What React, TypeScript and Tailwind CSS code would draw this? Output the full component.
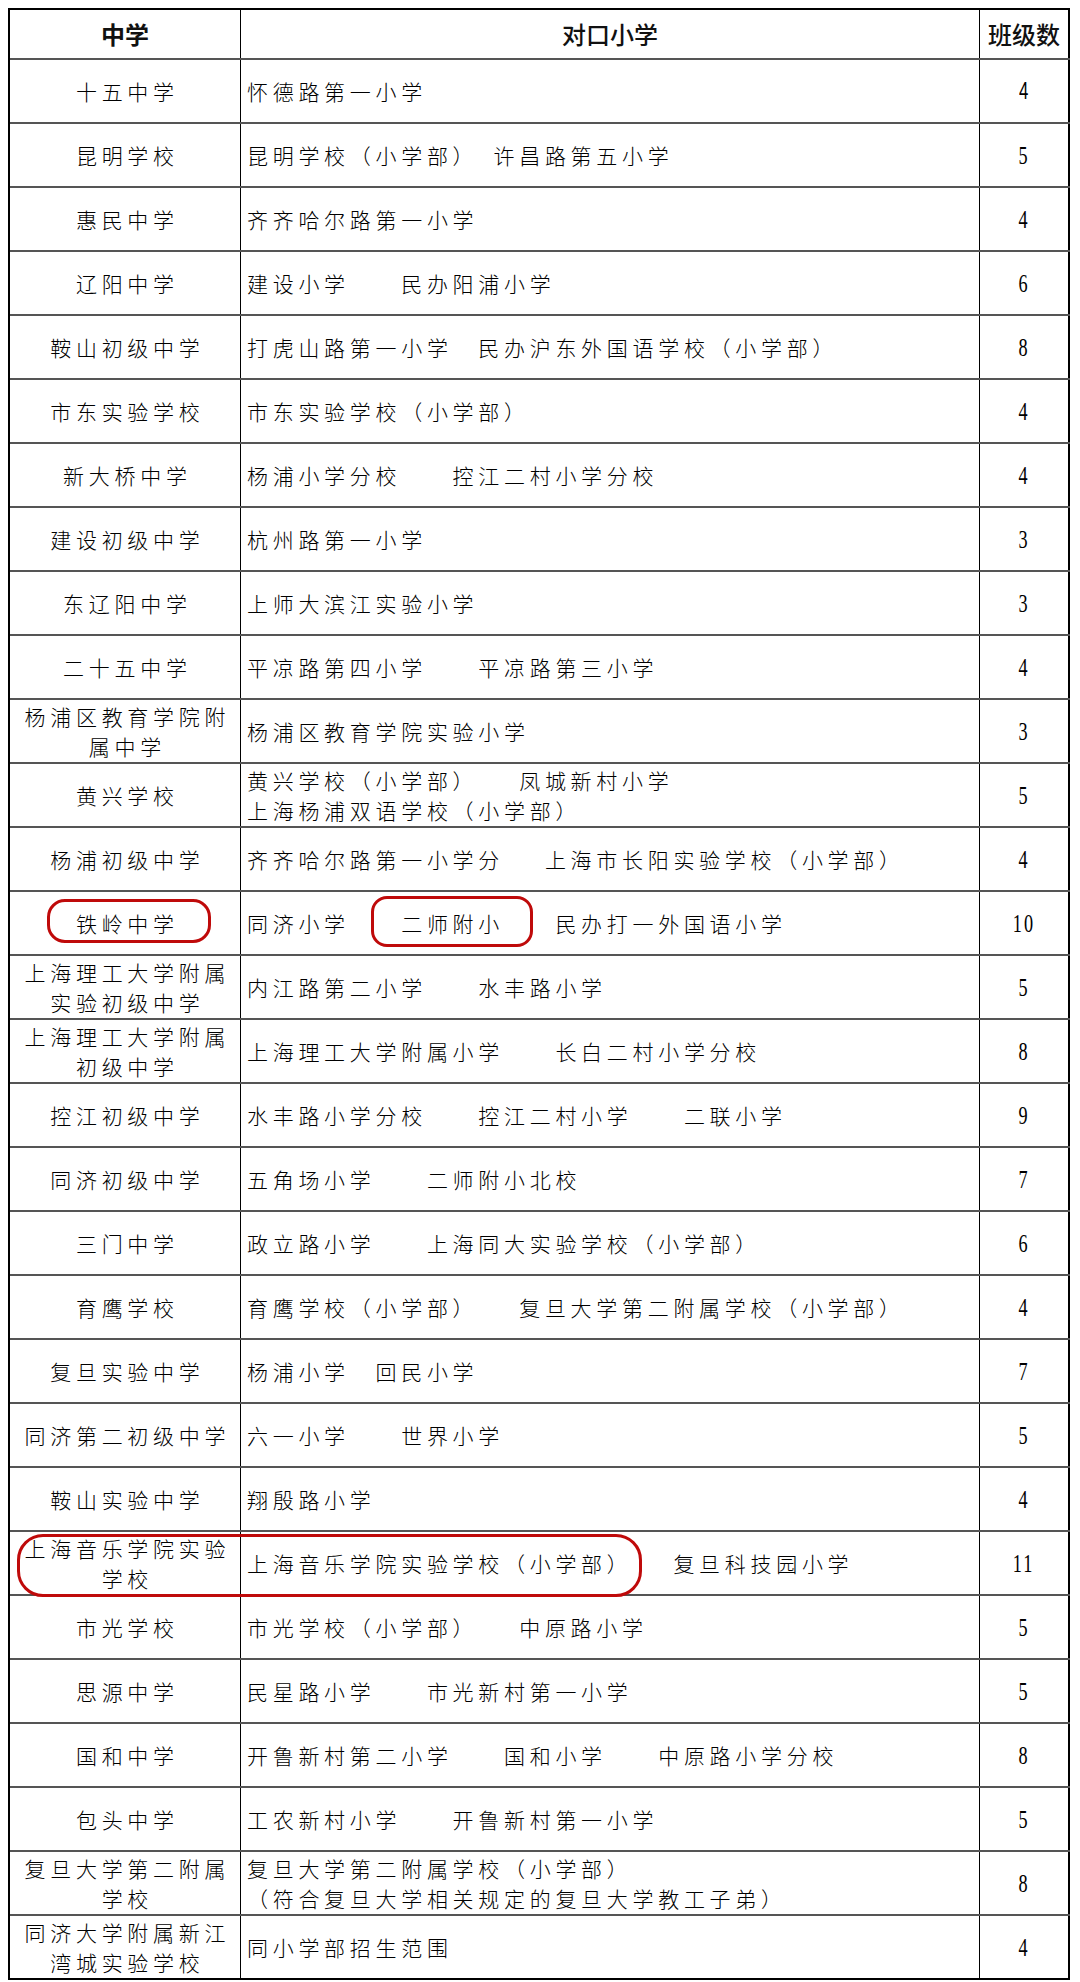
const S = "\u3000";
const S2 = S + S;

interface Row {
  school: string[];
  primary: string[];
  classes: string;
}

const rows: Row[] = [
  { school: ["十五中学"], primary: ["怀德路第一小学"], classes: "4" },
  { school: ["昆明学校"], primary: ["昆明学校（小学部）" + S + "许昌路第五小学"], classes: "5" },
  { school: ["惠民中学"], primary: ["齐齐哈尔路第一小学"], classes: "4" },
  { school: ["辽阳中学"], primary: ["建设小学" + S2 + "民办阳浦小学"], classes: "6" },
  { school: ["鞍山初级中学"], primary: ["打虎山路第一小学" + S + "民办沪东外国语学校（小学部）"], classes: "8" },
  { school: ["市东实验学校"], primary: ["市东实验学校（小学部）"], classes: "4" },
  { school: ["新大桥中学"], primary: ["杨浦小学分校" + S2 + "控江二村小学分校"], classes: "4" },
  { school: ["建设初级中学"], primary: ["杭州路第一小学"], classes: "3" },
  { school: ["东辽阳中学"], primary: ["上师大滨江实验小学"], classes: "3" },
  { school: ["二十五中学"], primary: ["平凉路第四小学" + S2 + "平凉路第三小学"], classes: "4" },
  { school: ["杨浦区教育学院附", "属中学"], primary: ["杨浦区教育学院实验小学"], classes: "3" },
  {
    school: ["黄兴学校"],
    primary: ["黄兴学校（小学部）" + S2 + "凤城新村小学", "上海杨浦双语学校（小学部）"],
    classes: "5",
  },
  { school: ["杨浦初级中学"], primary: ["齐齐哈尔路第一小学分" + S + "\u2002上海市长阳实验学校（小学部）"], classes: "4" },
  { school: ["铁岭中学"], primary: ["同济小学" + S2 + "二师附小" + S2 + "民办打一外国语小学"], classes: "10" },
  { school: ["上海理工大学附属", "实验初级中学"], primary: ["内江路第二小学" + S2 + "水丰路小学"], classes: "5" },
  { school: ["上海理工大学附属", "初级中学"], primary: ["上海理工大学附属小学" + S2 + "长白二村小学分校"], classes: "8" },
  { school: ["控江初级中学"], primary: ["水丰路小学分校" + S2 + "控江二村小学" + S2 + "二联小学"], classes: "9" },
  { school: ["同济初级中学"], primary: ["五角场小学" + S2 + "二师附小北校"], classes: "7" },
  { school: ["三门中学"], primary: ["政立路小学" + S2 + "上海同大实验学校（小学部）"], classes: "6" },
  { school: ["育鹰学校"], primary: ["育鹰学校（小学部）" + S2 + "复旦大学第二附属学校（小学部）"], classes: "4" },
  { school: ["复旦实验中学"], primary: ["杨浦小学" + S + "回民小学"], classes: "7" },
  { school: ["同济第二初级中学"], primary: ["六一小学" + S2 + "世界小学"], classes: "5" },
  { school: ["鞍山实验中学"], primary: ["翔殷路小学"], classes: "4" },
  { school: ["上海音乐学院实验", "学校"], primary: ["上海音乐学院实验学校（小学部）" + S2 + "复旦科技园小学"], classes: "11" },
  { school: ["市光学校"], primary: ["市光学校（小学部）" + S2 + "中原路小学"], classes: "5" },
  { school: ["思源中学"], primary: ["民星路小学" + S2 + "市光新村第一小学"], classes: "5" },
  { school: ["国和中学"], primary: ["开鲁新村第二小学" + S2 + "国和小学" + S2 + "中原路小学分校"], classes: "8" },
  { school: ["包头中学"], primary: ["工农新村小学" + S2 + "开鲁新村第一小学"], classes: "5" },
  {
    school: ["复旦大学第二附属", "学校"],
    primary: ["复旦大学第二附属学校（小学部）", "（符合复旦大学相关规定的复旦大学教工子弟）"],
    classes: "8",
  },
  { school: ["同济大学附属新江", "湾城实验学校"], primary: ["同小学部招生范围"], classes: "4" },
];

function DataRow({ row, index, last }: { row: Row; index: number; last: boolean }) {
  return (
    <div className={`flex h-[64px] border-b-2 ${last ? "border-black" : "border-[#555]"}`}>
      <div className="flex w-[231px] flex-col items-center justify-center border-r border-black pl-[4.7px] text-center text-[21px] leading-[30px] tracking-[4.7px] text-black">
        {row.school.map((line) => (
          <div key={line}>{line}</div>
        ))}
      </div>
      <div className="flex w-[739px] flex-col justify-center whitespace-nowrap border-r border-black pl-[6px] text-[21px] leading-[30px] tracking-[4.7px] text-black">
        {row.primary.map((line) => (
          <div key={line}>{line}</div>
        ))}
      </div>
      <div className="flex w-[90px] items-center justify-center border-r-2 border-black text-black">
        {index === 0 ? (
          <span className="inline-block scale-x-[0.7] font-['Liberation_Sans',sans-serif] text-[24px]">
            {row.classes}
          </span>
        ) : (
          <span className="inline-block scale-x-[0.7] font-['Liberation_Serif',serif] text-[26px] tracking-[3px]">
            {row.classes}
          </span>
        )}
      </div>
    </div>
  );
}

export default function App() {
  return (
    <div className="h-[1982px] w-[1080px] bg-white pl-[8px] pt-[8px] font-['Noto_Sans_CJK_SC',sans-serif] font-light">
      <div className="relative w-[1062px] border-l-2 border-t-2 border-black">
        <div className="flex h-[50px] border-b-2 border-[#555] text-[24px] text-[#111]">
          <div className="flex w-[231px] items-center justify-center border-r border-black font-bold">
            中学
          </div>
          <div className="flex w-[739px] items-center justify-center border-r border-black font-medium">
            对口小学
          </div>
          <div className="flex w-[90px] items-center justify-center border-r-2 border-black font-medium">
            班级数
          </div>
        </div>

        {rows.map((row, i) => (
          <DataRow key={row.school.join("")} row={row} index={i} last={i === rows.length - 1} />
        ))}

        {/* red circles drawn over the table */}
        <div className="pointer-events-none absolute left-[37px] top-[889px] h-[44px] w-[164px] rounded-[18px] border-[3px] border-[#bf0a0a]" />
        <div className="pointer-events-none absolute left-[361px] top-[886px] h-[51px] w-[162px] rounded-[16px] border-[3px] border-[#bf0a0a]" />
        <div className="pointer-events-none absolute left-[7px] top-[1524px] h-[63px] w-[625px] rounded-[26px] border-[3px] border-[#bf0a0a]" />
      </div>
    </div>
  );
}
